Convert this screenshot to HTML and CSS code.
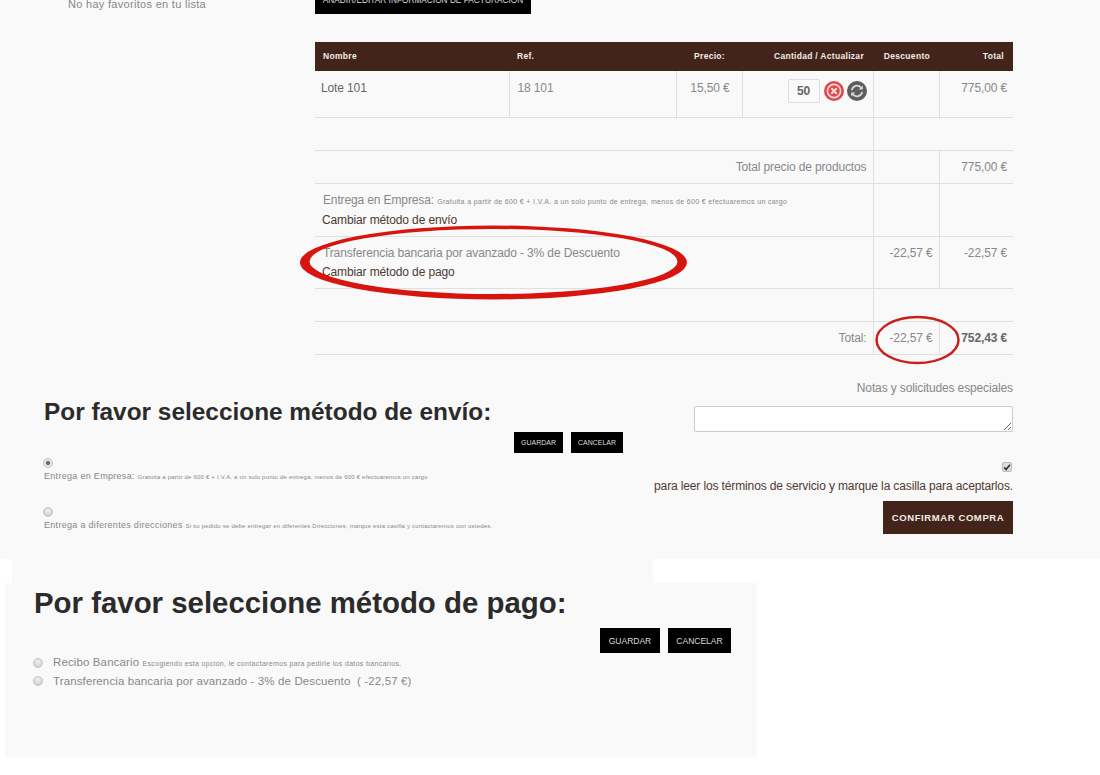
FILE: index.html
```html
<!DOCTYPE html>
<html lang="en">
<head>
  <meta charset="UTF-8">
  <meta name="viewport" content="width=device-width, initial-scale=1.0">
  <title>Confirmar compra</title>
  <link rel="stylesheet" href="styles.css">
</head>
<body>
  <div class="order">
    <div class="order-top">
      <aside class="sidebar">
        <p class="favorites">No hay favoritos en tu lista</p>
      </aside>
      <main class="cart">
        <a class="black-button billing-button">AÑADIR/EDITAR INFORMACIÓN DE FACTURACIÓN</a>
        <table class="cart-table">
          <colgroup>
            <col class="col-name"><col class="col-ref"><col class="col-price"><col class="col-qty"><col class="col-disc"><col class="col-total">
          </colgroup>
          <thead>
            <tr>
              <th class="left">Nombre</th>
              <th class="left">Ref.</th>
              <th class="th-price">Precio:</th>
              <th>Cantidad / Actualizar</th>
              <th class="th-disc">Descuento</th>
              <th>Total</th>
            </tr>
          </thead>
          <tbody>
            <tr class="row-product">
              <td class="product-name left">Lote 101</td>
              <td class="left line">18 101</td>
              <td class="line unit-price">15,50 €</td>
              <td class="line">
                <div class="qty-tools">
                  <span class="qty-box">50</span>
                  <svg class="tool" viewBox="0 0 20 20"><circle cx="10" cy="10" r="10" fill="#e04848"/><circle cx="10" cy="10" r="6.600" fill="none" stroke="#f7dcdc" stroke-width="1.600"/><path d="M7.300 7.300l5.400 5.400M12.700 7.300l-5.400 5.400" stroke="#f7dcdc" stroke-width="2"/></svg>
                  <svg class="tool" viewBox="0 0 20 20"><circle cx="10" cy="10" r="10" fill="#5d5d5d"/><path d="M4.800 9.200a5.300 5.300 0 0 1 9.400-2.400M15.200 10.800a5.300 5.300 0 0 1-9.400 2.400" fill="none" stroke="#dcdcdc" stroke-width="1.700"/><path d="M15.800 4.600v4h-4zM4.200 15.400v-4h4z" fill="#dcdcdc"/></svg>
                </div>
              </td>
              <td class="line"></td>
              <td class="line">775,00 €</td>
            </tr>
            <tr class="row-blank">
              <td colspan="4"></td>
              <td class="line" colspan="2"></td>
            </tr>
            <tr class="row-sum">
              <td colspan="4">Total precio de productos</td>
              <td class="line"></td>
              <td class="line">775,00 €</td>
            </tr>
            <tr class="row-shipping">
              <td class="left method" colspan="4">
                <div class="method-name">Entrega en Empresa: <small>Gratuita a partir de 600 € + I.V.A. a un solo punto de entrega, menos de 600 € efectuaremos un cargo</small></div>
                <a class="method-link">Cambiar método de envío</a>
              </td>
              <td class="line"></td>
              <td class="line"></td>
            </tr>
            <tr class="row-payment">
              <td class="left method" colspan="4">
                <div class="method-name">Transferencia bancaria por avanzado - 3% de Descuento</div>
                <a class="method-link">Cambiar método de pago</a>
              </td>
              <td class="line">-22,57 €</td>
              <td class="line">-22,57 €</td>
            </tr>
            <tr class="row-blank">
              <td colspan="4"></td>
              <td class="line" colspan="2"></td>
            </tr>
            <tr class="row-sum">
              <td colspan="4">Total:</td>
              <td class="line">-22,57 €</td>
              <td class="line grand-total">752,43 €</td>
            </tr>
          </tbody>
        </table>
      </main>
    </div>

    <div class="order-bottom">
      <section class="shipping">
        <h2 class="shipping-title">Por favor seleccione método de envío:</h2>
        <div class="button-row shipping-buttons">
          <a class="black-button ship-guardar">GUARDAR</a>
          <a class="black-button ship-cancelar">CANCELAR</a>
        </div>
        <div class="shipping-option">
          <span class="radio radio-on"></span>
          <div class="option-label">Entrega en Empresa: <small>Gratuita a partir de 600 € + I.V.A. a un solo punto de entrega, menos de 600 € efectuaremos un cargo</small></div>
        </div>
        <div class="shipping-option">
          <span class="radio"></span>
          <div class="option-label">Entrega a diferentes direcciones <small>Si su pedido se debe entregar en diferentes Direcciones, marque esta casilla y contactaremos con ustedes.</small></div>
        </div>
      </section>
      <section class="notes">
        <label class="notes-label" for="notes">Notas y solicitudes especiales</label>
        <textarea id="notes" class="notes-input"></textarea>
        <span class="terms-check">
          <svg viewBox="0 0 10 10" width="8" height="8"><path d="M1.500 5.500l2.400 2.600 4.800-6" fill="none" stroke="#333" stroke-width="2"/></svg>
        </span>
        <p class="terms">para leer los términos de servicio y marque la casilla para aceptarlos.</p>
        <a class="confirm-button">CONFIRMAR COMPRA</a>
      </section>
    </div>
  </div>

  <div class="strip"></div>
  <section class="payment">
    <h2 class="payment-title">Por favor seleccione método de pago:</h2>
    <div class="button-row payment-buttons">
      <a class="black-button pay-guardar">GUARDAR</a>
      <a class="black-button pay-cancelar">CANCELAR</a>
    </div>
    <div class="payment-option">
      <span class="radio"></span>
      <span class="option-label">Recibo Bancario <small>Escogiendo esta opción, le contactaremos para pedirle los datos bancarios.</small></span>
    </div>
    <div class="payment-option">
      <span class="radio"></span>
      <span class="option-label">Transferencia bancaria por avanzado - 3% de Descuento &nbsp;( -22,57 €)</span>
    </div>
  </section>

  <!-- red marks painted over the screenshot -->
  <svg class="marks" width="1100" height="400" viewBox="0 0 1100 400">
    <path d="M300 262.500A193.500 37 0 1 1 687 262.500A193.500 37 0 1 1 300 262.500ZM309.500 261.500A184 32.500 0 1 0 677.500 261.500A184 32.500 0 1 0 309.500 261.500Z" fill="#d8140f" fill-rule="evenodd"/>
    <ellipse cx="917.500" cy="340" rx="41" ry="23" fill="none" stroke="#c9201a" stroke-width="2.500"/>
  </svg>
</body>
</html>
```

FILE: styles.css
```css
body {
  margin: 0;
  height: 775px;
  overflow: hidden;
  position: relative;
  background-color: white;
  color: #888;
  font-family: "Liberation Sans", Arial, sans-serif;
  font-size: 12px;
  letter-spacing: -0.13px;
}

.order {
  height: 559px;
  background-color: #f9f9f9;
}

.order-top {
  display: flex;
  height: 354px;
}

.sidebar {
  width: 315px;
  padding-left: 68px;
  box-sizing: border-box;
}

.favorites {
  margin: -3px 0 0;
  font-size: 11px;
  letter-spacing: 0.3px;
  line-height: 14px;
}

.cart {
  width: 698px;
}

.black-button {
  display: flex;
  align-items: center;
  justify-content: center;
  background-color: black;
  color: #ddd;
  font-size: 8px;
  letter-spacing: 0;
}

.billing-button {
  width: 216px;
  height: 28px;
  margin-top: -14px;
  margin-bottom: 28px;
  font-size: 8.300px;
}

/* cart table */
.cart-table {
  width: 698px;
  table-layout: fixed;
  border-collapse: collapse;
}

.col-name { width: 194px; }
.col-ref { width: 167px; }
.col-price { width: 66px; }
.col-qty { width: 131px; }
.col-disc { width: 66px; }
.col-total { width: 74px; }

.cart-table th {
  height: 27px;
  padding: 0 9px 2px 0;
  background-color: #42241a;
  color: #f3ece8;
  font-size: 8.500px;
  letter-spacing: 0.3px;
  text-align: right;
}

.cart-table th.left {
  padding-left: 8px;
  text-align: left;
}

.cart-table th.th-price {
  padding-right: 17px;
}

.cart-table td {
  padding: 9px 6px 0 0;
  border-bottom: 1px solid #dfdfdf;
  vertical-align: top;
  text-align: right;
  line-height: 14px;
}

.cart-table td.left {
  padding-left: 8px;
  text-align: left;
}

.cart-table td.line {
  border-left: 1px solid #dfdfdf;
}

.cart-table .row-product td {
  height: 36px;
  padding-top: 10px;
}

.cart-table td.product-name {
  padding-left: 6px;
  color: #666;
}

.cart-table td.unit-price {
  padding-right: 12px;
}

.row-blank td { height: 23px; }
.row-sum td { height: 23px; }
.row-shipping td { height: 43px; }
.row-payment td { height: 42px; }

.grand-total {
  color: #666;
  font-weight: bold;
}

.qty-tools {
  display: flex;
  justify-content: flex-end;
  align-items: center;
  gap: 3px;
  margin-top: -2px;
}

.qty-box {
  width: 30px;
  height: 22px;
  margin-right: 1px;
  border: 1px solid #ddd;
  border-radius: 2px;
  background-color: #fafafa;
  color: #666;
  font-weight: bold;
  line-height: 22px;
  text-align: center;
}

.tool {
  width: 20px;
  height: 20px;
}

.method-name {
  margin-bottom: 5px;
}

.row-shipping .method-name {
  margin-bottom: 4px;
}

.method-name small {
  font-size: 7px;
  letter-spacing: 0.35px;
}

.method-link {
  display: block;
  margin-left: -1px;
  color: #4e3a32;
}

/* shipping + notes */
.order-bottom {
  display: flex;
  height: 205px;
}

.shipping {
  width: 654px;
  padding-left: 44px;
  box-sizing: border-box;
}

.shipping-title {
  margin: 43px 0 0;
  color: #2b2b2b;
  font-size: 24.400px;
  line-height: 30px;
  letter-spacing: 0;
}

.button-row {
  display: flex;
  justify-content: flex-end;
  gap: 8px;
}

.shipping-buttons {
  width: 579px;
  margin-top: 5px;
}

.ship-guardar,
.ship-cancelar {
  height: 21px;
  font-size: 7px;
}

.ship-guardar { width: 49px; }
.ship-cancelar { width: 52px; }

.shipping-option {
  height: 44px;
  padding-top: 5px;
}

.shipping-option .radio {
  display: block;
  height: 8px;
  margin-left: -1px;
  margin-bottom: 2px;
}

.option-label {
  font-size: 9px;
  letter-spacing: 0.3px;
  line-height: 12px;
}

.shipping-option small {
  font-size: 6px;
  letter-spacing: 0.2px;
}

.radio {
  display: inline-block;
  flex: none;
  width: 8px;
  height: 8px;
  border: 1px solid #c4c4c4;
  border-radius: 50%;
  background: radial-gradient(circle at 50% 35%, #f2f2f2, #c4c4c4);
}

.radio-on {
  background: radial-gradient(circle, #666 0 1.500px, #e4e4e4 2.500px);
}

.notes {
  width: 359px;
  display: flex;
  flex-direction: column;
  align-items: flex-end;
}

.notes-label {
  margin-top: 28px;
  line-height: 12px;
}

.notes-input {
  width: 319px;
  height: 26px;
  margin-top: 12px;
  padding: 0;
  box-sizing: border-box;
  border: 1px solid #ccc;
  border-radius: 2px;
  background-color: white;
}

.terms-check {
  display: flex;
  align-items: center;
  justify-content: center;
  width: 8px;
  height: 8px;
  margin-top: 30px;
  margin-right: 1px;
  border: 1px solid #bbb;
  border-radius: 2px;
  background-color: #ddd;
}

.terms {
  margin: 7px 0 0;
  color: #4e3a32;
  line-height: 14px;
  white-space: nowrap;
}

.confirm-button {
  width: 130px;
  height: 33px;
  margin-top: 8px;
  background-color: #42241a;
  color: #f3ece8;
  font-size: 9.500px;
  font-weight: bold;
  letter-spacing: 0.6px;
  line-height: 33px;
  text-align: center;
}

/* pasted payment dialog */
.strip {
  width: 641px;
  height: 24px;
  margin-left: 12px;
  background-color: #f9f9f9;
}

.payment {
  width: 752px;
  height: 174px;
  margin-left: 5px;
  padding-left: 29px;
  box-sizing: border-box;
  background-color: #f9f9f9;
}

.payment-title {
  margin: 0;
  padding-top: 3px;
  color: #2b2b2b;
  font-size: 29.400px;
  line-height: 34px;
  letter-spacing: 0;
}

.payment-buttons {
  width: 697px;
  margin-top: 8px;
  margin-bottom: 1px;
}

.pay-guardar,
.pay-cancelar {
  height: 25px;
  font-size: 8.500px;
}

.pay-guardar { width: 60px; }
.pay-cancelar { width: 63px; }

.payment-option {
  display: flex;
  align-items: center;
  gap: 10px;
  height: 18px;
  margin-left: -1px;
}

.payment-option .option-label {
  font-size: 11.500px;
  letter-spacing: 0.12px;
}

.payment-option small {
  font-size: 7px;
  letter-spacing: 0.33px;
}

.marks {
  position: absolute;
  left: 0;
  top: 0;
  pointer-events: none;
}
```
